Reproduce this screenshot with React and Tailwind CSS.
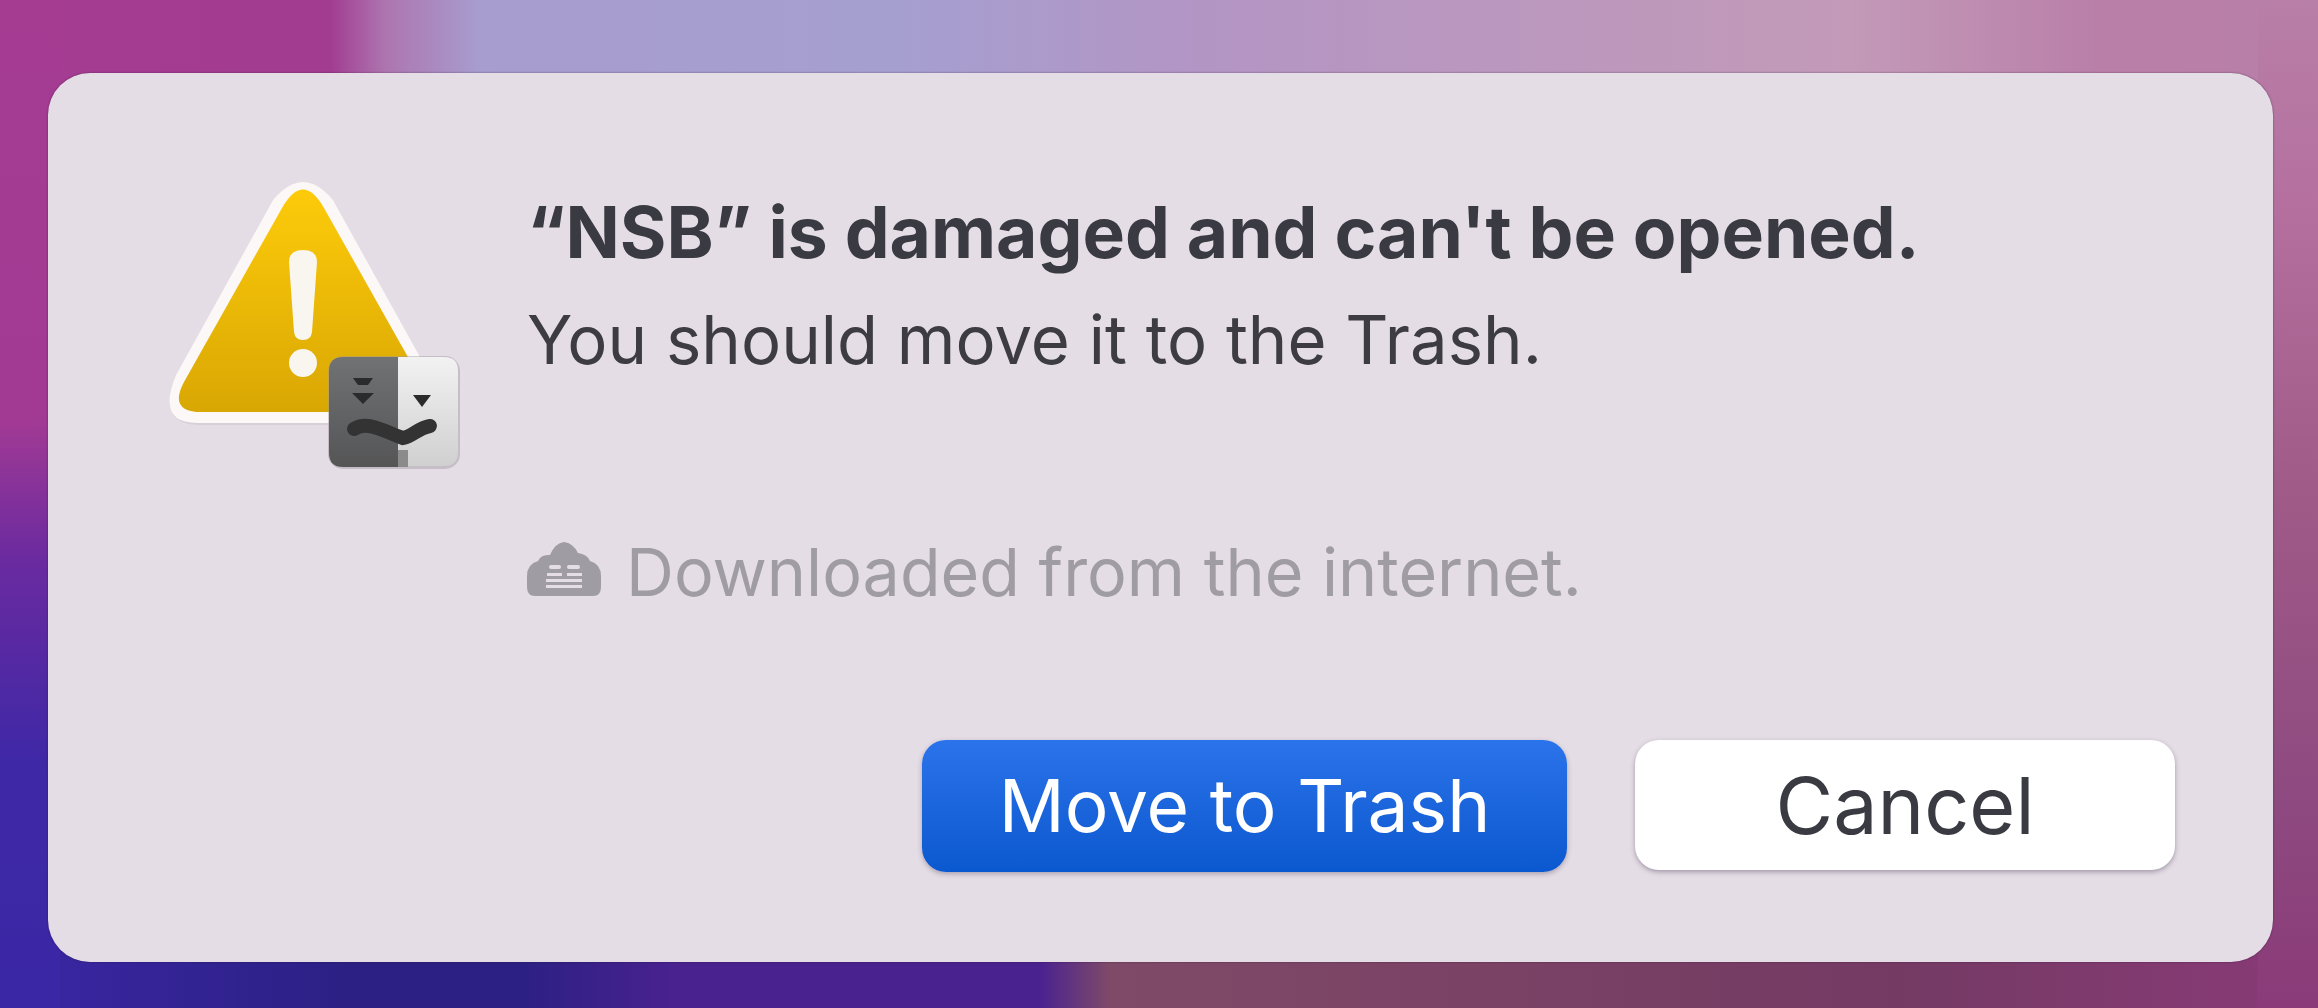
const font = { fontFamily: 'Inter, "Liberation Sans", sans-serif' };

const WarningIcon = () => (
  <svg width="310" height="310" viewBox="0 0 310 310" className="blur-[0.7px]">
    <defs>
      <linearGradient id="warnFill" x1="0" y1="0" x2="0" y2="1">
        <stop offset="0" stopColor="#fdcb0a" />
        <stop offset="1" stopColor="#d9a703" />
      </linearGradient>
      <linearGradient id="badgeDark" x1="0" y1="0" x2="0" y2="1">
        <stop offset="0" stopColor="#707274" />
        <stop offset="1" stopColor="#555556" />
      </linearGradient>
      <linearGradient id="badgeLight" x1="0" y1="0" x2="0" y2="1">
        <stop offset="0" stopColor="#f2f2f2" />
        <stop offset="1" stopColor="#d0d0d0" />
      </linearGradient>
    </defs>
    {/* triangle */}
    <path
      d="M 113 30 Q 143 -6 173 30 L 270 205 Q 290 253 249 255 L 37 255 Q -4 253 16 205 Z"
      fill="#cfc8d0"
      opacity="0.6"
    />
    <path
      d="M 113 30 Q 143 -6 173 30 L 270 205 Q 290 253 249 253 L 37 253 Q -4 253 16 205 Z"
      fill="#fbf8f7"
    />
    <path
      d="M 122 38 Q 143 1 164 38 L 262 212 Q 278 242 244 242 L 42 242 Q 8 242 24 212 Z"
      fill="url(#warnFill)"
    />
    <path d="M 129 92 Q 129 80 143 80 Q 157 80 157 92 L 152 162 Q 151 170 143 170 Q 135 170 134 162 Z" fill="#f9f6ef" />
    <circle cx="143" cy="193" r="14" fill="#f9f6ef" />
    {/* finder badge */}
    <rect x="168" y="186" width="132" height="113" rx="15" fill="#9f98a2" opacity="0.45" />
    <path d="M 183 187 H 238 V 297 H 183 Q 169 297 169 283 V 201 Q 169 187 183 187 Z" fill="url(#badgeDark)" />
    <path d="M 238 187 H 284 Q 298 187 298 201 V 282 Q 298 296 284 296 H 238 Z" fill="url(#badgeLight)" />
    <rect x="238" y="280" width="10" height="17" fill="#8b8b8b" />
    <path d="M 193 208 H 213 L 208 215 H 198 Z" fill="#2b2b2c" />
    <path d="M 192 223 H 214 L 203 234 Z" fill="#2b2b2c" />
    <path d="M 253 225 H 271 L 262 237 Z" fill="#2b2b2c" />
    <path
      d="M 194 259 C 208 250 225 262 243 268 C 252 267 258 258 270 256"
      fill="none"
      stroke="#333334"
      strokeWidth="14"
      strokeLinecap="round"
    />
  </svg>
);

const CloudIcon = () => (
  <svg width="74" height="54" viewBox="0 0 74 54" className="blur-[0.5px] mb-[6px]">
    <path
      d="M 8 54 Q 0 54 0 45 V 34 Q 0 22 11 19 Q 14 12 23 13 Q 28 1 37 0 Q 46 1 51 11 Q 60 12 63 19 Q 74 22 74 34 V 45 Q 74 54 66 54 Z"
      fill="#a09ca3"
    />
    <g fill="#e4dde5">
      <rect x="22" y="23" width="12" height="4" rx="2" />
      <rect x="40" y="23" width="13" height="4" rx="2" />
      <rect x="20" y="31" width="15" height="3" />
      <rect x="40" y="31" width="15" height="3" />
      <rect x="19" y="37" width="36" height="3" />
      <rect x="19" y="43" width="36" height="3" />
    </g>
  </svg>
);

export default function App() {
  return (
    <div
      style={font}
      className="h-screen w-full flex pt-[73px] pl-[48px] pr-[45px] pb-[46px] bg-no-repeat bg-[linear-gradient(180deg,#a53c92_0px,#a23a94_420px,#6a2aa0_560px,#3f28a6_760px,#3a27a5_1008px),linear-gradient(180deg,#b87fa8_0px,#b5709f_200px,#a05a88_500px,#8e4a80_800px,#8a3a78_1008px),linear-gradient(90deg,#a53c92_0px,#a23c90_330px,#ad75b0_385px,#a79dce_480px,#a59fd0_900px,#b395c4_1200px,#c39ab8_1850px,#b97fa9_2100px,#b87fa8_2318px),linear-gradient(90deg,#3a27a5_0px,#2c2084_350px,#2c2084_520px,#4a2290_680px,#4a2290_1040px,#7f4a68_1110px,#7a4265_1500px,#743a64_1900px,#8a3a78_2318px)] [background-size:60px_100%,60px_100%,100%_140px,100%_140px] [background-position:left_top,right_top,left_top,left_bottom]"
    >
      <div className="flex-1 flex bg-[#e5dde5] rounded-[42px] shadow-[0_0_2px_rgba(40,20,50,0.6)]">
        <div className="w-[479px] shrink-0 pl-[112px] pt-[97px]">
          <WarningIcon />
        </div>
        <div className="flex-1 flex flex-col pr-[98px] pb-[90px] pt-[119px] blur-[0.6px]">
          <h1 className="text-[71.3px] leading-[80px] font-bold text-[#3a3a42] whitespace-nowrap">“NSB” is damaged and can't be opened.</h1>
          <p className="text-[67px] leading-[80px] mt-[28px] text-[#3d3c43] whitespace-nowrap">You should move it to the Trash.</p>
          <div className="flex items-center gap-[25px] mt-[152px] text-[66.4px] leading-[80px] text-[#a09ca3] whitespace-nowrap">
            <CloudIcon />
            <span>Downloaded from the internet.</span>
          </div>
          <div className="mt-auto flex justify-end gap-[68px]">
            <button className="w-[645px] h-[132px] rounded-[24px] text-white text-[73px] bg-gradient-to-b from-[#2a73ea] to-[#0a58cf] shadow-[0_2px_5px_rgba(60,50,80,0.35)]">
              Move to Trash
            </button>
            <button className="w-[540px] h-[130px] rounded-[24px] bg-white text-[#3a3a42] text-[79px] shadow-[0_2px_5px_rgba(60,50,80,0.4)]">
              Cancel
            </button>
          </div>
        </div>
      </div>
    </div>
  );
}
